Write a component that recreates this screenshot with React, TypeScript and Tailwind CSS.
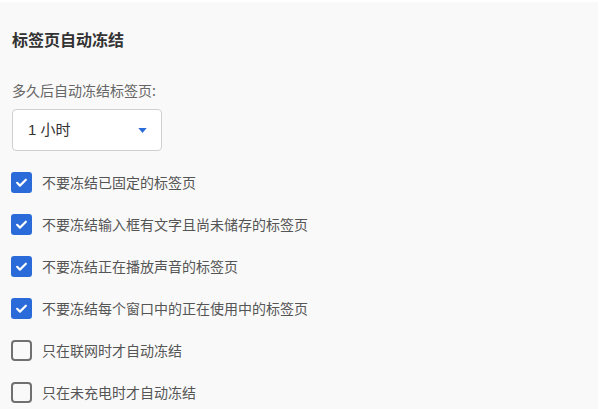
const options: { label: string; checked: boolean }[] = [
  { label: "不要冻结已固定的标签页", checked: true },
  { label: "不要冻结输入框有文字且尚未储存的标签页", checked: true },
  { label: "不要冻结正在播放声音的标签页", checked: true },
  { label: "不要冻结每个窗口中的正在使用中的标签页", checked: true },
  { label: "只在联网时才自动冻结", checked: false },
  { label: "只在未充电时才自动冻结", checked: false },
];

function Box({ checked }: { checked: boolean }) {
  if (checked) {
    return (
      <span className="flex h-[21px] w-[21px] shrink-0 items-center justify-center rounded-[3px] bg-[#2b6bd9]">
        <svg viewBox="0 0 24 24" className="h-[15px] w-[15px]" fill="none" stroke="#fff" strokeWidth={3.4} strokeLinecap="round" strokeLinejoin="round">
          <path d="M5 12.5l4.5 4.5L19 7.5" />
        </svg>
      </span>
    );
  }
  return <span className="h-[21px] w-[21px] shrink-0 rounded-[4px] border-2 border-[#707070]" />;
}

export default function App() {
  return (
    <div
      className="h-[409px] w-[600px] overflow-hidden border-t-2 border-r-2 border-white bg-[#f9f9f9] pl-[11px] pt-[25px]"
      style={{ fontFamily: '"Noto Sans CJK SC", "Noto Sans", sans-serif' }}
    >
      <h1 className="pl-px text-[16px] font-bold leading-6 text-[#333]">标签页自动冻结</h1>
      <div className="mt-[29px] pl-px text-[14px] leading-5 text-[#666]">多久后自动冻结标签页:</div>
      <div className="ml-px mt-[9px] flex h-[42px] w-[150px] items-center justify-between rounded-[4px] border border-[#d0d0d0] bg-white pl-[15px] pr-[14px]">
        <span className="text-[15px] text-[#333]" style={{ fontFamily: '"Liberation Sans", "Noto Sans CJK SC", sans-serif' }}>
          1 小时
        </span>
        <svg viewBox="0 0 10 6" className="h-[5px] w-[9px]">
          <path d="M0 0h10L5 6z" fill="#2b6bd9" />
        </svg>
      </div>
      <div className="mt-[10px] flex flex-col">
        {options.map((o) => (
          <label key={o.label} className="flex h-[42px] items-center gap-[10px]">
            <Box checked={o.checked} />
            <span className="text-[14px] text-[#555]">{o.label}</span>
          </label>
        ))}
      </div>
    </div>
  );
}
